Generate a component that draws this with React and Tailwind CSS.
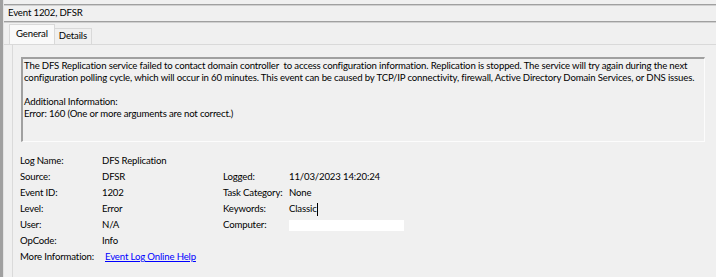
import React from "react";

const left = [
  ["Log Name:", "DFS Replication"],
  ["Source:", "DFSR"],
  ["Event ID:", "1202"],
  ["Level:", "Error"],
  ["User:", "N/A"],
  ["OpCode:", "Info"],
];

function Row({ label, value, children }) {
  return (
    <div className="flex h-4 items-center whitespace-nowrap">
      <span className="w-[82px] shrink-0">{label}</span>
      {children || <span>{value}</span>}
    </div>
  );
}

export default function App() {
  return (
    <div
      className="w-[716px] h-[277px] overflow-hidden bg-[#f0f0f0] text-[9.6px] tracking-[-0.15px] text-black flex"
      style={{ fontFamily: '"Segoe UI", Lato, sans-serif' }}
    >
      {/* left window frame */}
      <div className="w-[3px] shrink-0 bg-[#a0a0a0]" />
      <div className="w-[1px] shrink-0 bg-[#e3e3e3]" />

      <div className="flex-1 flex flex-col">
        <div className="h-[4px]" />
        <div className="h-[2px] bg-[#a0a0a0] border-b border-[#d0d0d0]" />
        <div className="h-[15px] flex items-center pl-[4px]">Event 1202, DFSR</div>
        <div className="h-[2px] bg-[#a0a0a0] border-b border-[#d0d0d0]" />

        {/* tabs */}
        <div className="flex items-end h-[22px] pl-[5px] border-b border-[#d9d9d9]">
          <div className="h-[20px] px-[6px] flex items-center bg-[#f9f9f9] border border-b-0 border-[#d9d9d9]">
            General
          </div>
          <div className="h-[16px] px-[4px] flex items-center bg-[#f0f0f0] border border-b-0 border-l-0 border-[#d9d9d9]">
            Details
          </div>
        </div>

        <div className="flex-1 pl-[8px] pr-[8px] pt-[12px] border-l border-[#dadada] ml-[8px]">
          {/* description box */}
          <div className="h-[85px] border-t-2 border-l-2 border-[#a0a0a0] border-r border-b border-r-[#fcfcfc] border-b-[#fcfcfc] pl-[1px] pt-[1px] leading-[12px] mr-[3px]">
            <p className="whitespace-nowrap">
              The DFS Replication service failed to contact domain controller&nbsp; to access configuration information. Replication is stopped. The service will try again during the next
            </p>
            <p className="whitespace-nowrap">
              configuration polling cycle, which will occur in 60 minutes. This event can be caused by TCP/IP connectivity, firewall, Active Directory Domain Services, or DNS issues.
            </p>
            <p className="mt-[12px]">Additional Information:</p>
            <p>Error: 160 (One or more arguments are not correct.)</p>
          </div>

          {/* properties */}
          <div className="flex mt-[11px]">
            <div className="w-[203px] -ml-[1px]">
              {left.map(([l, v]) => (
                <Row key={l} label={l} value={v} />
              ))}
              <Row label="More Information:">
                <span className="text-[#0000ff] underline ml-[3px]">Event Log Online Help</span>
              </Row>
            </div>
            <div className="pt-4 whitespace-nowrap">
              <div className="flex h-4 items-center">
                <span className="w-[66px] shrink-0">Logged:</span>
                <span>11/03/2023 14:20:24</span>
              </div>
              <div className="flex h-4 items-center">
                <span className="w-[66px] shrink-0">Task Category:</span>
                <span>None</span>
              </div>
              <div className="flex h-4 items-center">
                <span className="w-[66px] shrink-0">Keywords:</span>
                <span>Classic</span>
                <span className="w-[1px] h-[13px] bg-black" />
              </div>
              <div className="flex h-4 items-center">
                <span className="w-[66px] shrink-0">Computer:</span>
                <span className="w-[115px] h-[11px] bg-white" />
              </div>
            </div>
          </div>
        </div>
      </div>
    </div>
  );
}
